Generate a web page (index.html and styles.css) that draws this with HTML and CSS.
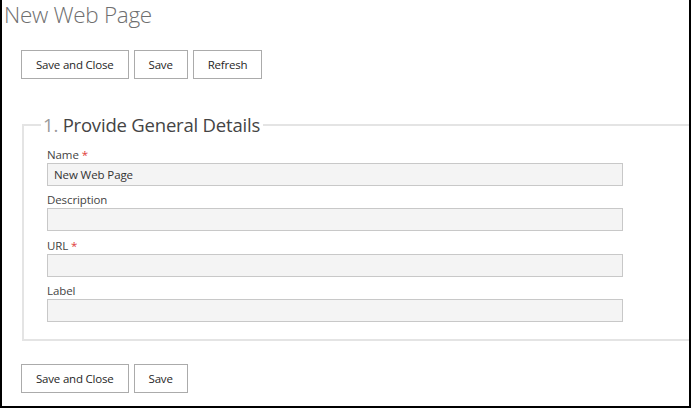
FILE: index.html
```html
<!DOCTYPE html>
<html>
<head>
<meta charset="utf-8">
<link rel="stylesheet" href="styles.css">
</head>
<body>
<div class="page">
  <h1 class="title">New Web Page</h1>
  <div class="actions actions-top">
    <button class="btn">Save and Close</button>
    <button class="btn">Save</button>
    <button class="btn">Refresh</button>
  </div>
  <fieldset class="section">
    <legend class="section-title"><span class="num">1.</span> Provide General Details</legend>
    <div class="field">
      <label class="field-label">Name <span class="req">*</span></label>
      <div class="input">New Web Page</div>
    </div>
    <div class="field">
      <label class="field-label">Description</label>
      <div class="input"></div>
    </div>
    <div class="field">
      <label class="field-label">URL <span class="req">*</span></label>
      <div class="input"></div>
    </div>
    <div class="field">
      <label class="field-label">Label</label>
      <div class="input"></div>
    </div>
  </fieldset>
  <div class="actions actions-bottom">
    <button class="btn">Save and Close</button>
    <button class="btn">Save</button>
  </div>
</div>
</body>
</html>
```

FILE: styles.css
```css
html, body {
  margin: 0;
  padding: 0;
  background: #fff;
}
body {
  font-family: "Open Sans", "Noto Sans", "Liberation Sans", sans-serif;
  color: #333;
}
.page {
  box-sizing: border-box;
  width: 691px;
  height: 408px;
  border: 2px solid #000;
  border-top: none;
  overflow: hidden;
}
.title {
  margin: 0;
  padding: 0 0 0 2px;
  font-size: 22.5px;
  font-weight: 300;
  line-height: 30px;
  color: #6f6f6f;
  letter-spacing: -0.3px;
}
.actions {
  display: flex;
  gap: 5px;
  padding-left: 19px;
}
.actions-top {
  margin-top: 20px;
}
.actions-bottom {
  margin-top: 23px;
}
.btn {
  box-sizing: border-box;
  height: 29px;
  padding: 0 14px;
  background: #fff;
  border: 1px solid #ababab;
  font-family: "Open Sans", "Noto Sans", sans-serif;
  font-size: 11.5px;
  color: #262626;
  letter-spacing: -0.2px;
}
.section {
  margin: 33px -20px 0 20px;
  padding: 8px 0 17px 23px;
  border: 2px solid #e4e4e4;
  min-width: 0;
}
.section-title {
  margin-left: -6px;
  padding: 0 3px 0 2px;
  font-size: 18.5px;
  line-height: 26px;
  color: #444;
  letter-spacing: -0.2px;
}
.num {
  color: #9a9a9a;
}
.field {
  display: flex;
  flex-direction: column;
  width: 576px;
}
.field + .field {
  margin-top: 5.3px;
}
.field-label {
  font-size: 11.5px;
  line-height: 17px;
  color: #444;
  letter-spacing: -0.1px;
}
.req {
  color: #e03a3a;
}
.input {
  box-sizing: border-box;
  height: 23px;
  padding: 0 6px;
  background: #f4f4f4;
  border: 1px solid #c8c8c8;
  font-size: 11.5px;
  line-height: 21px;
  color: #333;
  letter-spacing: -0.1px;
}
```
